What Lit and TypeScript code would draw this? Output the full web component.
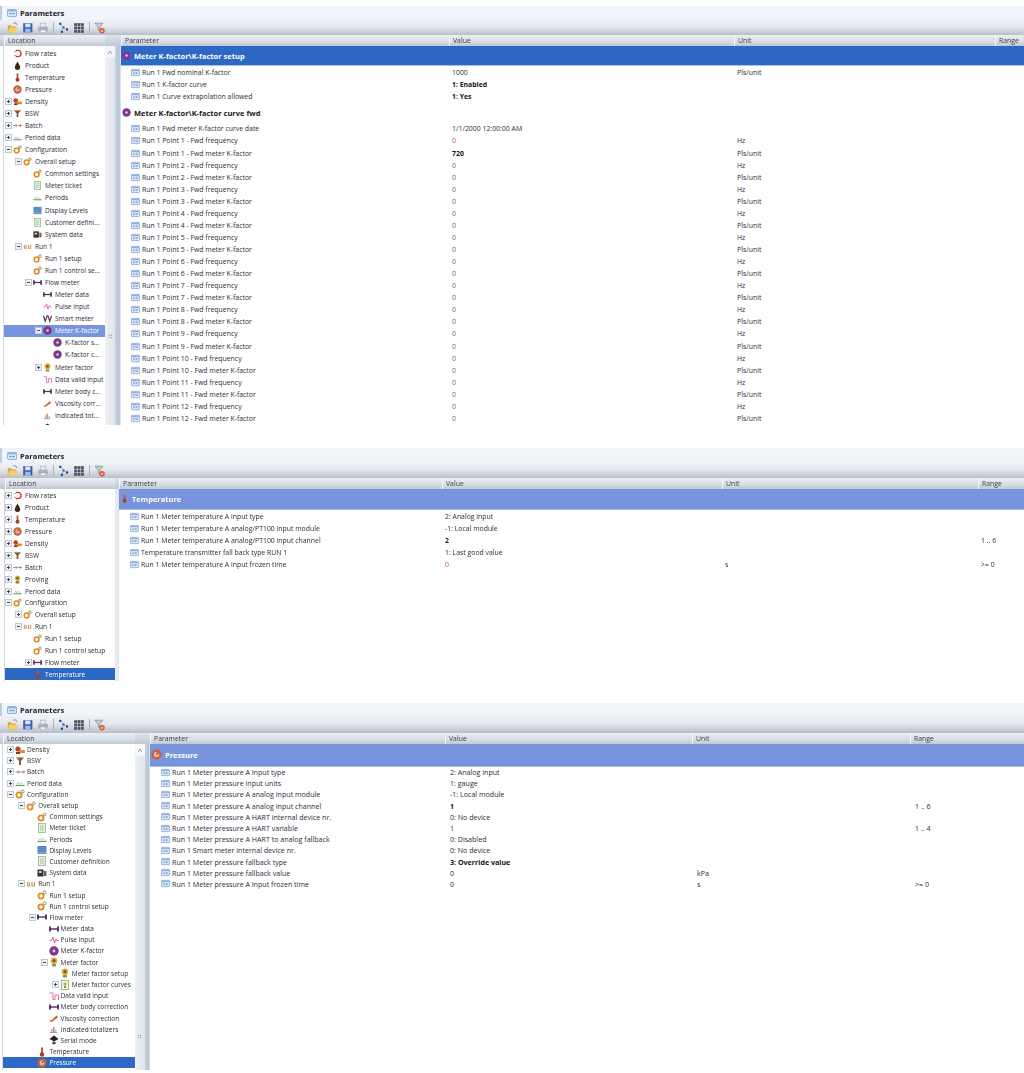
import { LitElement, html, css, svg, nothing } from "lit";
import { customElement, property } from "lit/decorators.js";

type TreeRow = [string, number, string, string, boolean?];
type GridRow = { p?: string; v?: string; u?: string; r?: string; vc?: string; group?: string; ic?: string };
interface Cfg {
  title: string; titleH: number; toolH: number; bodyH: number; treeL: number; treeW: number; scroll: number; split: number;
  cols: number[]; rowH: number; treeH: number; treeTop: number; base: number; step: number; secH: number; secGap: number; secColor: string;
  secLabel: string; secIcon: string; secIc: number; nodeIc: number; sel: string; font: number; treeFont: number; cellPad: number;
  tree: TreeRow[]; rows: GridRow[]; grip?: number; thumb?: boolean; iconL: number;
}

const ic: Record<string, unknown> = {
  flow: svg`<path d="M3 1.5h2.5a3.5 3.5 0 0 1 0 7H3" fill="none" stroke="#c8402a" stroke-width="1.5"/><path d="M1 3h3M1 7h3" stroke="#e08a70" stroke-width="1"/>`,
  drop: svg`<path d="M5 .5C6 3 8 5 8 7a3 3 0 0 1-6 0C2 5 4 3 5 .5z" fill="#3b2a1a"/>`,
  thermo: svg`<rect x="4" y=".5" width="2" height="6" fill="#b5583c"/><circle cx="5" cy="7.5" r="2.2" fill="#a53f28"/>`,
  gauge: svg`<circle cx="5" cy="5" r="4.6" fill="#c9603a"/><circle cx="5" cy="5" r="2.4" fill="#e8b898"/><path d="M5 5l1.5-2" stroke="#7a2410" stroke-width="1"/>`,
  density: svg`<circle cx="3" cy="4" r="2.6" fill="#b5481f"/><rect x="4" y="5" width="6" height="3" rx="1" fill="#e08a3c"/><rect x="1" y="7" width="4" height="2" fill="#8a3a1a"/>`,
  bsw: svg`<path d="M1 1h8L6 5v4H4V5z" fill="#8a5a3a"/><path d="M1 1h8v1H1z" fill="#c9a080"/>`,
  batch: svg`<path d="M.5 5h4M5.5 5h4" stroke="#8a8a8a" stroke-width="1"/><path d="M3 3.5L4.5 5 3 6.5M8 3.5L9.5 5 8 6.5" fill="none" stroke="#b0603a" stroke-width=".9"/>`,
  prove: svg`<circle cx="5" cy="3.5" r="3" fill="#e0b040"/><circle cx="5" cy="3.5" r="1.4" fill="#8a6020"/><rect x="3" y="6.5" width="4" height="3" fill="#a08040"/>`,
  period: svg`<path d="M.5 7.5h9" stroke="#6a9a6a" stroke-width="1.2"/><path d="M1.5 6.5L3 4.5 4.5 6.5 6 4.5 8 6.5" fill="none" stroke="#a0c8a0" stroke-width=".9"/>`,
  gear: svg`<circle cx="4" cy="6" r="2.6" fill="none" stroke="#e08a20" stroke-width="1.8"/><circle cx="7.7" cy="2.4" r="1.4" fill="none" stroke="#9a8a5a" stroke-width="1"/>`,
  ticket: svg`<rect x="1.5" y=".5" width="7" height="9" fill="#e6f2e0" stroke="#8ab88a" stroke-width=".8"/><path d="M3 3h4M3 5h4M3 7h4" stroke="#8ab88a" stroke-width=".7"/>`,
  display: svg`<rect x=".5" y="1" width="9" height="6.5" fill="#5a8ac8"/><rect x=".5" y="7.5" width="9" height="1.5" fill="#7a8a9a"/>`,
  sys: svg`<rect x=".5" y="1.5" width="6" height="7" fill="#333"/><rect x="7" y="3" width="2.5" height="5" fill="#666"/><rect x="2" y="3" width="2.5" height="2" fill="#ddd"/>`,
  run: svg`<path d="M1.5 3v4h2V3M6 3v4h2.5V3" fill="none" stroke="#d09a50" stroke-width="1.2"/>`,
  meter: svg`<path d="M1 5h8" stroke="#5a2a6a" stroke-width="1.4"/><path d="M1 2.5v5M9 2.5v5" stroke="#4a2a5a" stroke-width="1.8"/>`,
  pulse: svg`<path d="M.5 5.5h2L4 2l1.5 6L7 4l.8 1.5h1.7" fill="none" stroke="#e060a0" stroke-width="1"/>`,
  smart: svg`<path d="M.5 2l2 6 2-6 1 0 2 6 2-6" fill="none" stroke="#5a2a6a" stroke-width="1.3"/>`,
  kfactor: svg`<circle cx="5" cy="5" r="4.7" fill="#7a3a8a"/><circle cx="5" cy="5" r="1.4" fill="#e0c8e8"/>`,
  factor: svg`<circle cx="5" cy="3.7" r="3.3" fill="#e0b040"/><circle cx="5" cy="3.7" r="1.6" fill="#7a5a20"/><path d="M3 7h4v2.5H3z" fill="#a09050"/>`,
  curves: svg`<rect x="1.5" y=".5" width="7" height="9" fill="#eef6e6" stroke="#7ab07a" stroke-width=".8"/><circle cx="5" cy="4" r="1.6" fill="#d0a030"/><rect x="4" y="6" width="2" height="2" fill="#a08030"/>`,
  valid: svg`<path d="M.5 2h3.5v6.5h2V4h3.5v5" fill="none" stroke="#e070a8" stroke-width="1"/>`,
  visc: svg`<path d="M1 7.5c2-1 3-1 4-3l3-2 1 2-3 2c-1 1-3 2.5-5 2.5z" fill="#d0602a"/>`,
  totals: svg`<path d="M1 8.5h7" stroke="#999" stroke-width="1"/><rect x="2" y="5" width="1.5" height="3" fill="#e0a090"/><rect x="4" y="3" width="1.5" height="5" fill="#d08070"/><rect x="6" y="5.5" width="1.5" height="2.5" fill="#c0c0c0"/>`,
  serial: svg`<path d="M5 .5l4.5 3.5L5 6.5.5 4z" fill="#222"/><path d="M5 6.5v3M3 8h4" stroke="#222" stroke-width="1.2"/>`,
  hw: svg`<rect x=".5" y="1.5" width="9" height="7" rx=".7" fill="#d6e4f6" stroke="#7ea6d8" stroke-width=".8"/><rect x="1" y="2" width="8" height="1.4" fill="#8fb4e2"/><path d="M2.5 5.6h1.6M5.2 5.6h2.2" stroke="#4a76b0" stroke-width="1"/>`,
};

const tbIcon: Record<string, unknown> = {
  open: svg`<path d="M1 4h4l1 1.5h5V13H1z" fill="#d9a63c"/><path d="M3 7h11l-2.5 6H1z" fill="#f2cf70"/><path d="M8 1.5c2-1 4 0 4.5 2" fill="none" stroke="#3a6ea8" stroke-width="1"/>`,
  save: svg`<rect x="1.5" y="1.5" width="11.5" height="11.5" fill="#3a62b4"/><rect x="4" y="2" width="6.5" height="4.5" fill="#dde6f4"/><rect x="4" y="8.5" width="6.5" height="4.5" fill="#a9bcdc"/>`,
  print: svg`<rect x="4" y="1.5" width="7" height="5" fill="#e8ecf0" stroke="#a0a8b0" stroke-width=".7"/><rect x="1.5" y="6" width="12" height="6" rx="1" fill="#a8b2bc"/><rect x="4" y="10" width="7" height="3.5" fill="#f0f2f4" stroke="#a0a8b0" stroke-width=".6"/>`,
  tree: svg`<path d="M3 2l4 5 4 2M7 7l-2 5" stroke="#8aa0c0" stroke-width=".9" fill="none"/><rect x="1.5" y="1" width="2.6" height="2.6" fill="#243a7a"/><rect x="5.5" y="5.5" width="2.6" height="2.6" fill="#2a6ac8"/><rect x="10" y="8" width="2.6" height="2.6" fill="#243a7a"/><rect x="3.5" y="11" width="2.6" height="2.6" fill="#243a7a"/>`,
  grid: svg`<rect x="1.5" y="1.5" width="12" height="12" fill="#4a4f5a"/><path d="M1.5 5.5h12M1.5 9.5h12M5.5 1.5v12M9.5 1.5v12" stroke="#c9ced6" stroke-width=".9"/>`,
  filter: svg`<path d="M1 1.5h10L7.5 6v5L5 9.5V6z" fill="#c8ccd2" stroke="#6a6f78" stroke-width=".7"/><circle cx="10" cy="11" r="3.4" fill="#e0552a"/><path d="M8.6 9.6l2.8 2.8M11.4 9.6l-2.8 2.8" stroke="#fff" stroke-width=".8"/>`,
};

const p1Rows: GridRow[] = [
  { p: "Run 1 Fwd nominal K-factor", v: "1000", u: "Pls/unit" },
  { p: "Run 1 K-factor curve", v: "1: Enabled", vc: "b" },
  { p: "Run 1 Curve extrapolation allowed", v: "1: Yes", vc: "b" },
  { group: "Meter K-factor\\K-factor curve fwd", ic: "kfactor" },
  { p: "Run 1 Fwd meter K-factor curve date", v: "1/1/2000 12:00:00 AM" },
];
for (let i = 1; i <= 12; i++) {
  p1Rows.push({ p: `Run 1 Point ${i} - Fwd frequency`, v: "0", u: "Hz", vc: i === 1 ? "red" : "dim" });
  p1Rows.push({ p: `Run 1 Point ${i} - Fwd meter K-factor`, v: i === 1 ? "720" : "0", u: "Pls/unit", vc: i === 1 ? "b" : "dim" });
}

const configs: Cfg[] = [
  {
    title: "Parameters", titleH: 14, toolH: 15, bodyH: 379, treeL: 4, treeW: 101, scroll: 10, split: 6,
    cols: [328, 285, 261, 30], rowH: 12.07, treeH: 12.08, treeTop: 1, base: 25, step: 10, secH: 20, secGap: 0.7, secColor: "#2d68c4",
    secLabel: "Meter K-factor\\K-factor setup", secIcon: "kfactor", secIc: 9, nodeIc: 9, sel: "#7894dc", font: 6.9, treeFont: 6.6, cellPad: 3,
    grip: 288, thumb: true, iconL: 10,
    tree: [
      ["Flow rates", 0, "", "flow"], ["Product", 0, "", "drop"], ["Temperature", 0, "", "thermo"], ["Pressure", 0, "", "gauge"],
      ["Density", 0, "+", "density"], ["BSW", 0, "+", "bsw"], ["Batch", 0, "+", "batch"], ["Period data", 0, "+", "period"],
      ["Configuration", 0, "-", "gear"], ["Overall setup", 1, "-", "gear"], ["Common settings", 2, "", "gear"], ["Meter ticket", 2, "", "ticket"],
      ["Periods", 2, "", "period"], ["Display Levels", 2, "", "display"], ["Customer defini...", 2, "", "ticket"], ["System data", 2, "", "sys"],
      ["Run 1", 1, "-", "run"], ["Run 1 setup", 2, "", "gear"], ["Run 1 control se...", 2, "", "gear"], ["Flow meter", 2, "-", "meter"],
      ["Meter data", 3, "", "meter"], ["Pulse input", 3, "", "pulse"], ["Smart meter", 3, "", "smart"], ["Meter K-factor", 3, "-", "kfactor", true],
      ["K-factor s...", 4, "", "kfactor"], ["K-factor c...", 4, "", "kfactor"], ["Meter factor", 3, "+", "factor"], ["Data valid input", 3, "", "valid"],
      ["Meter body c...", 3, "", "meter"], ["Viscosity corr...", 3, "", "visc"], ["Indicated tot...", 3, "", "totals"], ["", 3, "", "serial"],
    ],
    rows: p1Rows,
  },
  {
    title: "Parameters", titleH: 15, toolH: 15, bodyH: 192, treeL: 5, treeW: 110, scroll: 0, split: 4,
    cols: [323, 280, 256, 45], rowH: 12, treeH: 11.9, treeTop: 1, base: 25, step: 10, secH: 20.5, secGap: 1, secColor: "#7894dc",
    secLabel: "Temperature", secIcon: "thermo", secIc: 9, nodeIc: 9, sel: "#2d68c4", font: 6.9, treeFont: 6.6, cellPad: 3, iconL: 11,
    tree: [
      ["Flow rates", 0, "+", "flow"], ["Product", 0, "+", "drop"], ["Temperature", 0, "+", "thermo"], ["Pressure", 0, "+", "gauge"],
      ["Density", 0, "+", "density"], ["BSW", 0, "+", "bsw"], ["Batch", 0, "+", "batch"], ["Proving", 0, "+", "prove"], ["Period data", 0, "+", "period"],
      ["Configuration", 0, "-", "gear"], ["Overall setup", 1, "+", "gear"], ["Run 1", 1, "-", "run"], ["Run 1 setup", 2, "", "gear"],
      ["Run 1 control setup", 2, "", "gear"], ["Flow meter", 2, "+", "meter"], ["Temperature", 2, "", "thermo", true],
    ],
    rows: [
      { p: "Run 1 Meter temperature A input type", v: "2: Analog input" },
      { p: "Run 1 Meter temperature A analog/PT100 input module", v: "-1: Local module" },
      { p: "Run 1 Meter temperature A analog/PT100 input channel", v: "2", vc: "b", r: "1 .. 6" },
      { p: "Temperature transmitter fall back type RUN 1", v: "1: Last good value" },
      { p: "Run 1 Meter temperature A input frozen time", v: "0", vc: "red", u: "s", r: ">= 0" },
    ],
  },
  {
    title: "Parameters", titleH: 13, toolH: 17, bodyH: 326, treeL: 3, treeW: 132, scroll: 10, split: 5,
    cols: [295, 247, 218, 114], rowH: 11.2, treeH: 11.2, treeTop: 0, base: 27, step: 11.2, secH: 22.5, secGap: 0, secColor: "#7894dc",
    secLabel: "Pressure", secIcon: "gauge", secIc: 11, nodeIc: 10, sel: "#2d68c4", font: 7.1, treeFont: 6.5, cellPad: 5, grip: 290, thumb: true, iconL: 11,
    tree: [
      ["Density", 0, "+", "density"], ["BSW", 0, "+", "bsw"], ["Batch", 0, "+", "batch"], ["Period data", 0, "+", "period"],
      ["Configuration", 0, "-", "gear"], ["Overall setup", 1, "-", "gear"], ["Common settings", 2, "", "gear"], ["Meter ticket", 2, "", "ticket"],
      ["Periods", 2, "", "period"], ["Display Levels", 2, "", "display"], ["Customer definition", 2, "", "ticket"], ["System data", 2, "", "sys"],
      ["Run 1", 1, "-", "run"], ["Run 1 setup", 2, "", "gear"], ["Run 1 control setup", 2, "", "gear"], ["Flow meter", 2, "-", "meter"],
      ["Meter data", 3, "", "meter"], ["Pulse input", 3, "", "pulse"], ["Meter K-factor", 3, "", "kfactor"], ["Meter factor", 3, "-", "factor"],
      ["Meter factor setup", 4, "", "factor"], ["Meter factor curves", 4, "+", "curves"], ["Data valid input", 3, "", "valid"],
      ["Meter body correction", 3, "", "meter"], ["Viscosity correction", 3, "", "visc"], ["Indicated totalizers", 3, "", "totals"], ["Serial mode", 3, "", "serial"],
      ["Temperature", 2, "", "thermo"], ["Pressure", 2, "", "gauge", true],
    ],
    rows: [
      { p: "Run 1 Meter pressure A input type", v: "2: Analog input" },
      { p: "Run 1 Meter pressure input units", v: "1: gauge" },
      { p: "Run 1 Meter pressure A analog input module", v: "-1: Local module" },
      { p: "Run 1 Meter pressure A analog input channel", v: "1", vc: "b", r: "1 .. 6" },
      { p: "Run 1 Meter pressure A HART internal device nr.", v: "0: No device" },
      { p: "Run 1 Meter pressure A HART variable", v: "1", r: "1 .. 4" },
      { p: "Run 1 Meter pressure A HART to analog fallback", v: "0: Disabled" },
      { p: "Run 1 Smart meter internal device nr.", v: "0: No device" },
      { p: "Run 1 Meter pressure fallback type", v: "3: Override value", vc: "b" },
      { p: "Run 1 Meter pressure fallback value", v: "0", u: "kPa" },
      { p: "Run 1 Meter pressure A input frozen time", v: "0", u: "s", r: ">= 0" },
    ],
  },
];

const icon = (k: string) => html`<svg class="ic" viewBox="0 0 10 10">${ic[k]}</svg>`;

@customElement("param-panel")
class ParamPanel extends LitElement {
  @property({ attribute: false }) cfg!: Cfg;
  static styles = css`
    :host { display: block; font-family: "Open Sans", "Liberation Sans", sans-serif; color: #2c2c38; overflow: hidden; }
    .title { display: flex; align-items: center; gap: 3px; padding-left: 5px; background: #f1f4f8; font-weight: 700; font-size: 7.6px; color: #20202a; box-sizing: border-box; border-left: 2px solid #c4ccd6; }
    .title .ic { width: 10px; height: 10px; }
    .tools { display: flex; align-items: center; gap: 3px; padding-left: 7px; box-sizing: border-box; background: linear-gradient(#eff2f5 0%, #e4e8ed 45%, #b5bfcb 100%); }
    .tools svg { width: 12px; height: 12px; flex: none; }
    .tsep { width: 1px; height: 11px; background: #a8b2be; margin: 0 1px; }
    .heads { display: flex; height: 11px; font-size: 6.9px; line-height: 12px; color: #3c3c48; }
    .hcell { background: linear-gradient(#eceff3, #d8dde4 60%, #bfc7d1); box-sizing: border-box; padding-left: 3px; border-left: 1px solid #f4f6f8; overflow: hidden; }
    .hgap { background: linear-gradient(#dfe4ea, #bfc7d1); }
    .body { display: flex; }
    .tree { box-sizing: border-box; background: #fff; border-left: 1px solid #d0d6de; overflow: hidden; flex: none; }
    .node { display: flex; align-items: center; white-space: nowrap; overflow: hidden; box-sizing: border-box; }
    .node.sel { color: #fff; }
    .exp { width: 7px; height: 7px; flex: none; margin-right: 1px; }
    .noexp { width: 7px; flex: none; margin-right: 1px; }
    .ic { flex: none; }
    .scroll { flex: none; background: #f4f6f9; position: relative; }
    .thumb { position: absolute; left: 0; right: 0; bottom: 0; background: linear-gradient(90deg, #eef1f5, #dfe5ec); }
    .arrow { position: absolute; left: 3px; top: 5px; width: 4px; height: 3px; }
    .split { flex: none; background: linear-gradient(90deg, #c9d4e2, #b5c3d4 70%, #e6ebf1); position: relative; }
    .split.light { background: linear-gradient(90deg, #eaeef3, #dfe5ec); }
    .grip { position: absolute; right: 8px; width: 5px; height: 5px; background-image: radial-gradient(circle, #4a5a6a .7px, transparent .8px); background-size: 2.5px 2.5px; }
    .grid { flex: 1; overflow: hidden; background: #fff; min-width: 0; }
    .sec { display: flex; align-items: center; gap: 3px; color: #fff; font-weight: 700; font-size: 7.5px; box-sizing: border-box; padding-left: 1px; border-bottom: 1px solid #a8c0e8; }
    .grp { display: flex; align-items: center; gap: 3px; height: 20px; padding-left: 1px; font-weight: 700; font-size: 7.5px; color: #16161e; }
    .row { display: flex; align-items: center; white-space: nowrap; }
    .c { box-sizing: border-box; overflow: hidden; flex: none; }
    .c.p { display: flex; align-items: center; gap: 2px; }
    .b { font-weight: 700; color: #16161e; }
    .red { color: #c4504a; }
    .dim { color: #6c6878; }
  `;
  render() {
    const c = this.cfg;
    const [c0, c1, c2] = c.cols;
    const hgap = c.scroll + c.split;
    const sized = (k: string, s: number) => html`<svg class="ic" style="width:${s}px;height:${s}px" viewBox="0 0 10 10">${ic[k]}</svg>`;
    const pad = `padding-left:${c.cellPad}px`;
    return html`
      <div class="title" style="height:${c.titleH}px">${icon("hw")}<span>${c.title}</span></div>
      <div class="tools" style="height:${c.toolH}px">
        <svg viewBox="0 0 15 15">${tbIcon.open}</svg><svg viewBox="0 0 15 15">${tbIcon.save}</svg><svg viewBox="0 0 15 15">${tbIcon.print}</svg><span class="tsep"></span>
        <svg viewBox="0 0 15 15">${tbIcon.tree}</svg><svg viewBox="0 0 15 15">${tbIcon.grid}</svg><span class="tsep"></span>
        <svg viewBox="0 0 15 15">${tbIcon.filter}</svg>
      </div>
      <div class="heads">
        <div class="hgap" style="width:${c.treeL}px"></div>
        <div class="hcell" style="width:${c.treeW}px">Location</div>
        <div class="hgap" style="width:${hgap}px"></div>
        <div class="hcell" style="width:${c0}px">Parameter</div>
        <div class="hcell" style="width:${c1}px">Value</div>
        <div class="hcell" style="width:${c2}px">Unit</div>
        <div class="hcell" style="flex:1">Range</div>
      </div>
      <div class="body" style="height:${c.bodyH}px;font-size:${c.font}px">
        <div style="width:${c.treeL - 1}px"></div>
        <div class="tree" style="width:${c.treeW + 1}px;padding-top:${c.treeTop}px;font-size:${c.treeFont}px">
          ${c.tree.map(([label, lv, exp, k, sel]) => html`
            <div class="node ${sel ? "sel" : ""}" style="height:${c.treeH}px;padding-left:${c.base + lv * c.step - 20 - c.treeL}px;background:${sel ? c.sel : "transparent"}">
              ${exp ? html`<svg class="exp" viewBox="0 0 7 7"><rect x=".5" y=".5" width="6" height="6" fill="#eef1f5" stroke="#c0c8d2"/><path d="M2 3.5h3${exp === "+" ? "M3.5 2v3" : ""}" stroke="#3a4a5a"/></svg>` : html`<span class="noexp"></span>`}
              ${sized(k, c.nodeIc)}<span style="margin-left:${12 - c.nodeIc}px">${label}</span>
            </div>`)}
        </div>
        ${c.scroll ? html`<div class="scroll" style="width:${c.scroll}px">
          ${c.thumb ? html`<div class="thumb" style="top:12px"></div>` : nothing}
          <svg class="arrow" viewBox="0 0 4 3"><path d="M0 3l2-3 2 3" fill="none" stroke="#7a8694" stroke-width=".8"/></svg>
        </div>` : nothing}
        <div class="split ${c.scroll ? "" : "light"}" style="width:${c.split}px">${c.grip ? html`<div class="grip" style="top:${c.grip}px"></div>` : nothing}</div>
        <div class="grid">
          <div class="sec" style="height:${c.secH}px;margin-bottom:${c.secGap}px;background:${c.secColor}">${sized(c.secIcon, c.secIc)}<span>${c.secLabel}</span></div>
          ${c.rows.map((r) => r.group
            ? html`<div class="grp">${sized(r.ic!, c.secIc)}<span>${r.group}</span></div>`
            : html`<div class="row" style="height:${c.rowH}px">
                <div class="c p" style="width:${c0}px;padding-left:${c.iconL}px">${sized("hw", 9)}<span>${r.p}</span></div>
                <div class="c v ${r.vc ?? ""}" style="width:${c1}px;${pad}">${r.v}</div>
                <div class="c u" style="width:${c2}px;${pad}">${r.u ?? ""}</div>
                <div class="c r" style="${pad}">${r.r ?? ""}</div>
              </div>`)}
        </div>
      </div>
    `;
  }
}

@customElement("app-root")
class AppRoot extends LitElement {
  static styles = css`
    :host { display: block; background: #fff; }
    .page { display: flex; flex-direction: column; padding-top: 6px; filter: blur(0.35px); height: 1073px; box-sizing: border-box; overflow: hidden; }
    .p2 { margin-top: 23px; }
    .p3 { margin-top: 22px; }
  `;
  render() {
    return html`<div class="page">
      <param-panel .cfg=${configs[0]}></param-panel>
      <param-panel class="p2" .cfg=${configs[1]}></param-panel>
      <param-panel class="p3" .cfg=${configs[2]}></param-panel>
    </div>`;
  }
}
void ParamPanel; void AppRoot;
